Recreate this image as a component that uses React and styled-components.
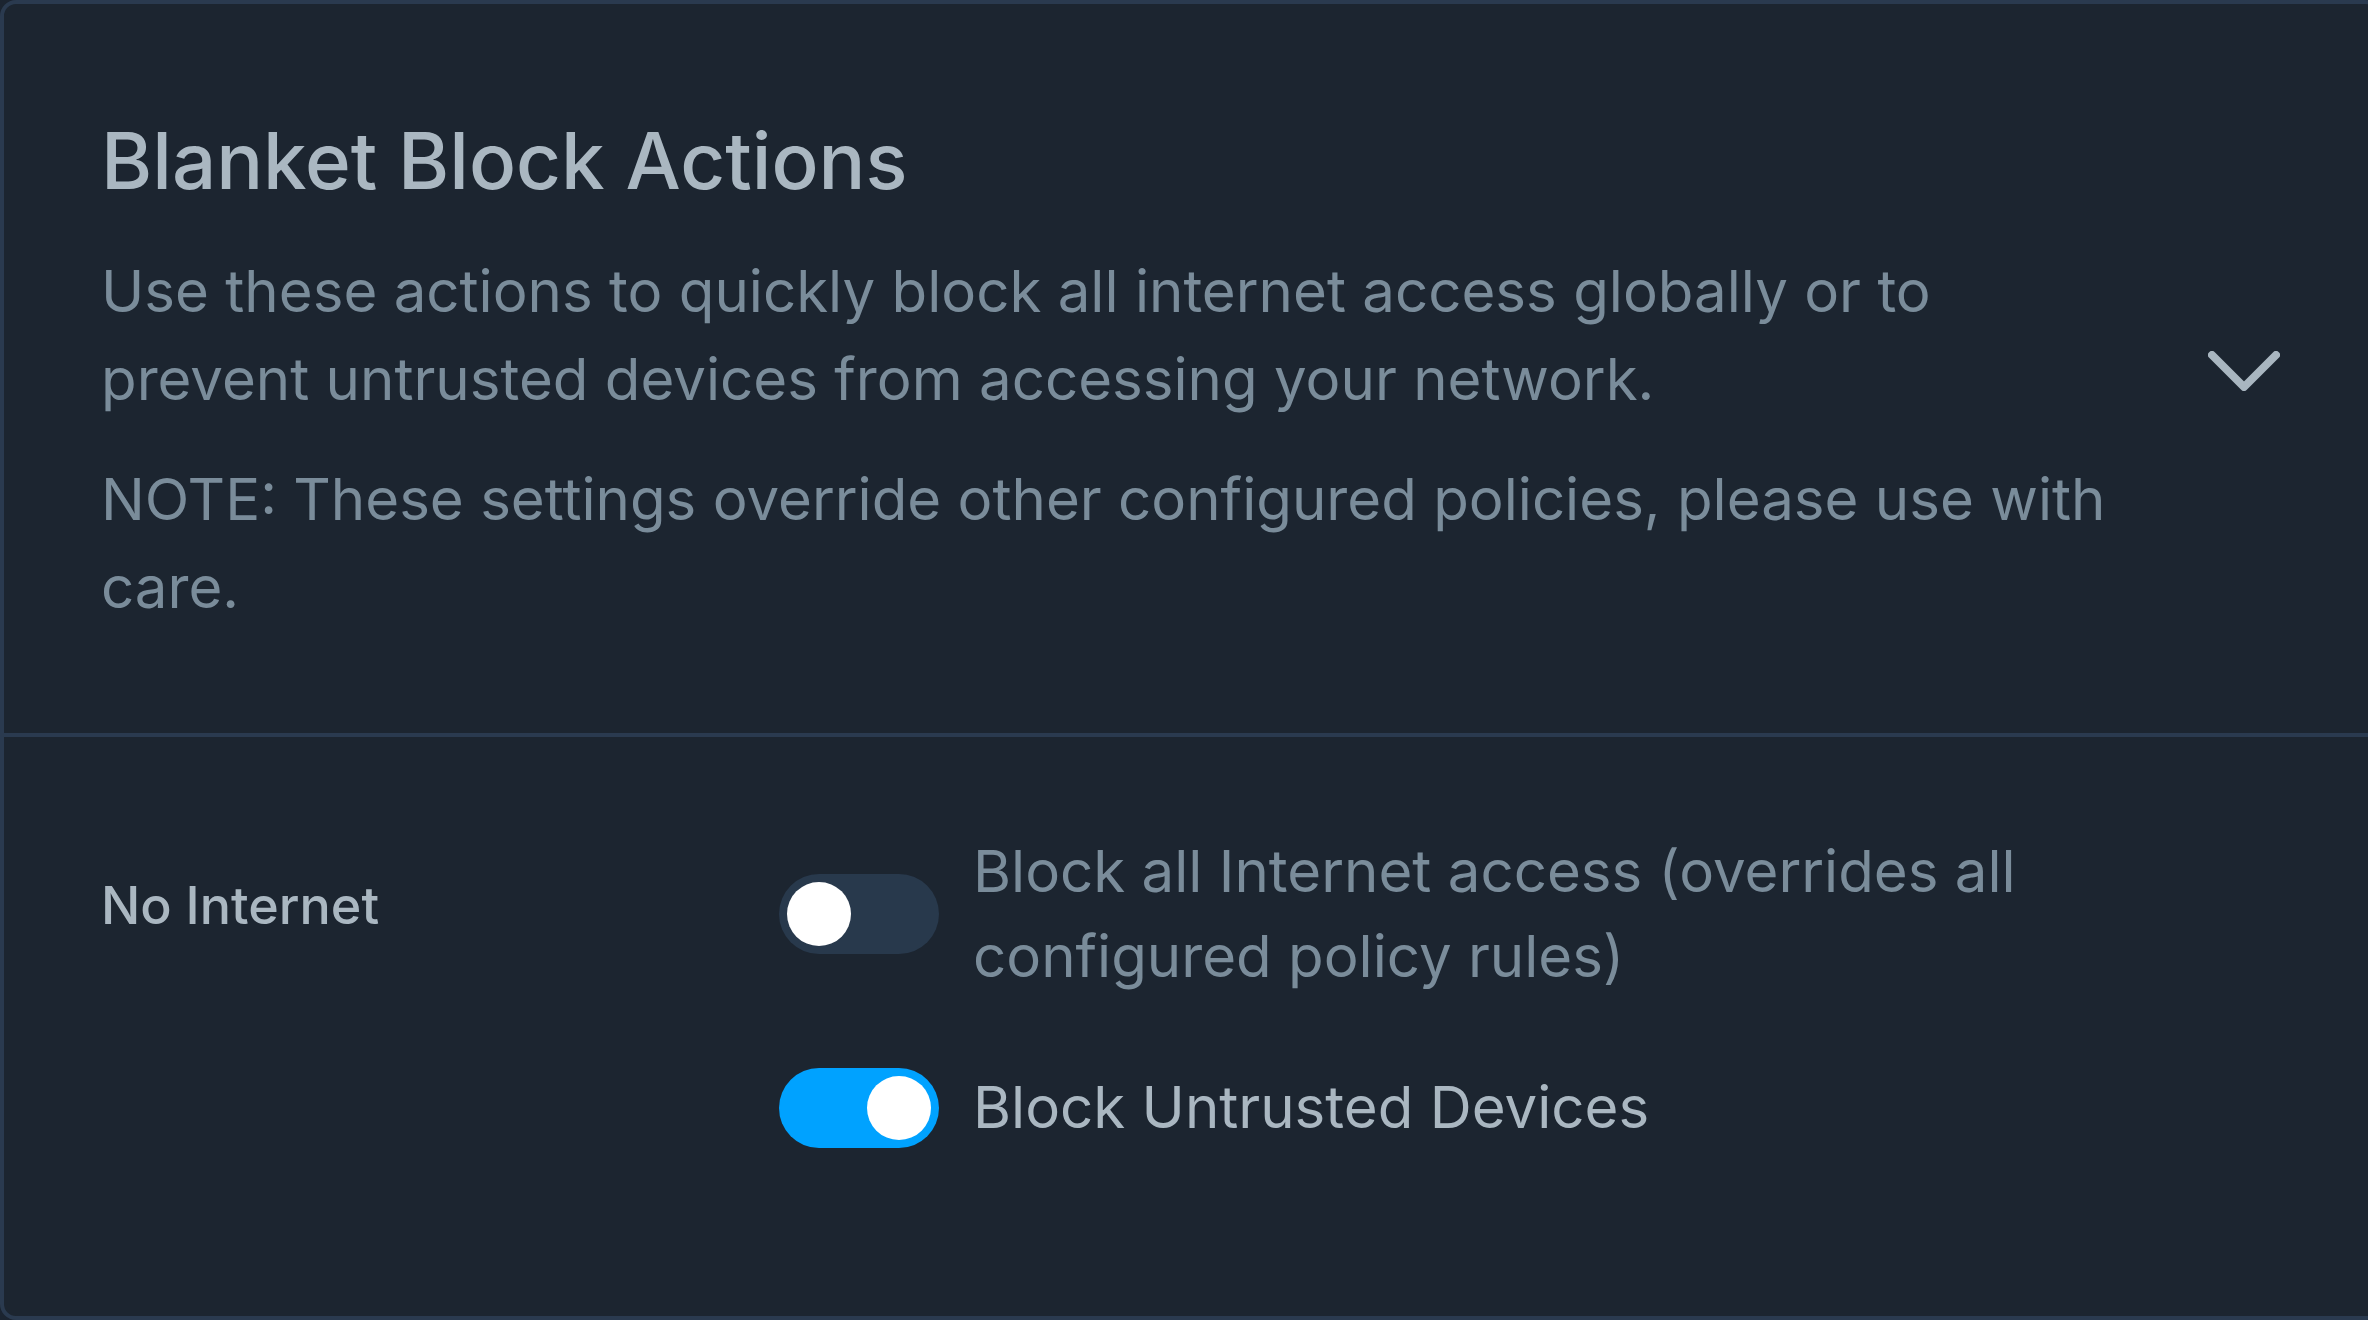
import React, { useState } from 'react'
import styled, { createGlobalStyle } from 'styled-components'

const GlobalStyle = createGlobalStyle`
body {
    margin: 0;
    background: #1b2430;
    font-family: Inter, "Noto Sans", "Liberation Sans", sans-serif;
    overflow: hidden;
}
`

function Chevron() {
    return (
        <ChevronIcon width="72" height="40" viewBox="0 0 72 40">
            <polyline points="4,4 36,36 68,4" fill="none" stroke="#a9b6c0" strokeWidth="8" strokeLinecap="round" strokeLinejoin="round" />
        </ChevronIcon>
    )
}

function Toggle({ on, onClick }) {
    return (
        <Track on={on ? 1 : 0} onClick={onClick}>
            <Knob on={on ? 1 : 0} />
        </Track>
    )
}

function App() {
    const [noInternet, setNoInternet] = useState(false)
    const [untrusted, setUntrusted] = useState(true)

    return (
        <>
            <GlobalStyle />
            <Card>
                <Header>
                    <HeaderText>
                        <Title>Blanket Block Actions</Title>
                        <Desc>Use these actions to quickly block all internet access globally or to prevent untrusted devices from accessing your network.</Desc>
                        <Desc>NOTE: These settings override other configured policies, please use with care.</Desc>
                    </HeaderText>
                    <Chevron />
                </Header>
                <Body>
                    <Label>No Internet</Label>
                    <Options>
                        <OptionRow>
                            <Toggle on={noInternet} onClick={() => setNoInternet(!noInternet)} />
                            <OptionText>Block all Internet access (overrides all configured policy rules)</OptionText>
                        </OptionRow>
                        <OptionRow>
                            <Toggle on={untrusted} onClick={() => setUntrusted(!untrusted)} />
                            <OptionText bright>Block Untrusted Devices</OptionText>
                        </OptionRow>
                    </Options>
                </Body>
            </Card>
        </>
    )
}

export default App

const Card = styled.div`
width: 2381px;
height: 1320px;
box-sizing: border-box;
border: 4px solid #2a3a4f;
border-radius: 16px;
background: #1c2530;
display: flex;
flex-direction: column;
`
const Header = styled.div`
flex-shrink: 0;
display: flex;
align-items: center;
gap: 80px;
padding: 106px 97px 102px 97px;
height: 733px;
box-sizing: border-box;
border-bottom: 4px solid #2a3a4f;
`
const HeaderText = styled.div`
flex: 1;
display: flex;
flex-direction: column;
`
const Title = styled.h1`
margin: 2px 0 38px;
font-size: 78px;
line-height: 96px;
font-weight: 500;
color: #aab7c1;
`
const Desc = styled.p`
margin: 0;
font-size: 58.2px;
line-height: 88px;
color: #7a8c9a;
& + & {
    margin-top: 32px;
}
`
const ChevronIcon = styled.svg`
flex-shrink: 0;
cursor: pointer;
`
const Body = styled.div`
flex: 1;
display: grid;
grid-template-columns: 678px 1fr;
align-items: start;
padding: 92px 97px 0;
`
const Label = styled.div`
font-size: 52px;
line-height: 78px;
font-weight: 500;
color: #aab7c1;
padding-top: 38px;
`
const Options = styled.div`
display: flex;
flex-direction: column;
gap: 66px;
`
const OptionRow = styled.div`
display: flex;
align-items: center;
gap: 34px;
`
const OptionText = styled.div`
max-width: 1100px;
font-size: 58.2px;
line-height: 85px;
color: ${props => props.bright ? '#aab7c1' : '#7a8c9a'};
`
const Track = styled.div`
flex-shrink: 0;
width: 160px;
height: 80px;
border-radius: 40px;
background: ${props => props.on ? '#00a2ff' : '#28394c'};
padding: 8px;
box-sizing: border-box;
display: flex;
justify-content: ${props => props.on ? 'flex-end' : 'flex-start'};
cursor: pointer;
`
const Knob = styled.div`
width: 64px;
height: 64px;
border-radius: 50%;
background: #ffffff;
`
